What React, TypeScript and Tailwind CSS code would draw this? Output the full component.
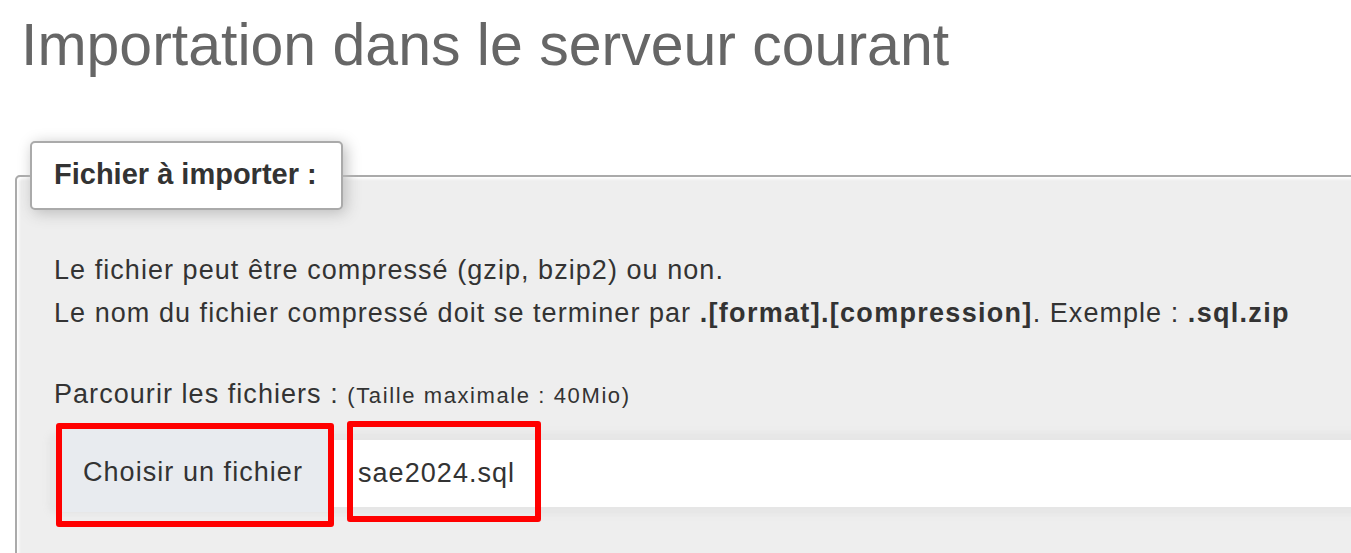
export default function App() {
  return (
    <div className="w-[1351px] h-[553px] overflow-hidden bg-white font-['Liberation_Sans',Arial,sans-serif]">
      <h1 className="pl-[21px] pt-[16px] text-[59px] leading-none font-normal text-[#666]">
        Importation dans le serveur courant
      </h1>
      <fieldset className="mt-[66px] ml-[15px] w-[1400px] h-[420px] border-2 border-[#aaa] rounded-tl-[5px] bg-[#eee] shadow-[inset_2px_2px_3px_#fff] p-0">
        <legend className="ml-[13px] h-[69px] w-[313px] bg-white border-2 border-[#aaa] rounded-[5px] pl-[22px] text-[29px] leading-[62px] font-bold text-[#333] shadow-[3px_3px_15px_#bbb]">
          Fichier à importer :
        </legend>
        <div className="pl-[37px] pt-[39px] text-[27px] leading-[43px] tracking-[1.05px] text-[#333]">
          <p>Le fichier peut être compressé (gzip, bzip2) ou non.</p>
          <p>
            Le nom du fichier compressé doit se terminer par{" "}
            <b className="tracking-[1.3px]">.[format].[compression]</b>. Exemple :{" "}
            <b className="tracking-[1.3px]">.sql.zip</b>
          </p>
          <p className="mt-[38px]">
            Parcourir les fichiers :{" "}
            <span className="text-[22px] tracking-[1.6px]">(Taille maximale : 40Mio)</span>
          </p>
          <div className="relative mt-[23px] ml-[2px] h-[67px] bg-white rounded-[3px] shadow-[0_0_6px_8px_#e6e6e6] flex items-start">
            <div className="mt-[-12px] h-[84px] w-[276px] bg-[#e8ebef] pl-[27px] pt-[4px] flex items-center">
              Choisir un fichier
            </div>
            <div className="pl-[26px] h-[67px] flex items-center">sae2024.sql</div>
            <div className="absolute left-0 top-[-17px] w-[278px] h-[104px] border-[6px] border-[#ff0000] rounded-[3px]" />
            <div className="absolute left-[291px] top-[-19px] w-[194px] h-[101px] border-[6px] border-[#ff0000] rounded-[3px]" />
          </div>
        </div>
      </fieldset>
    </div>
  );
}
